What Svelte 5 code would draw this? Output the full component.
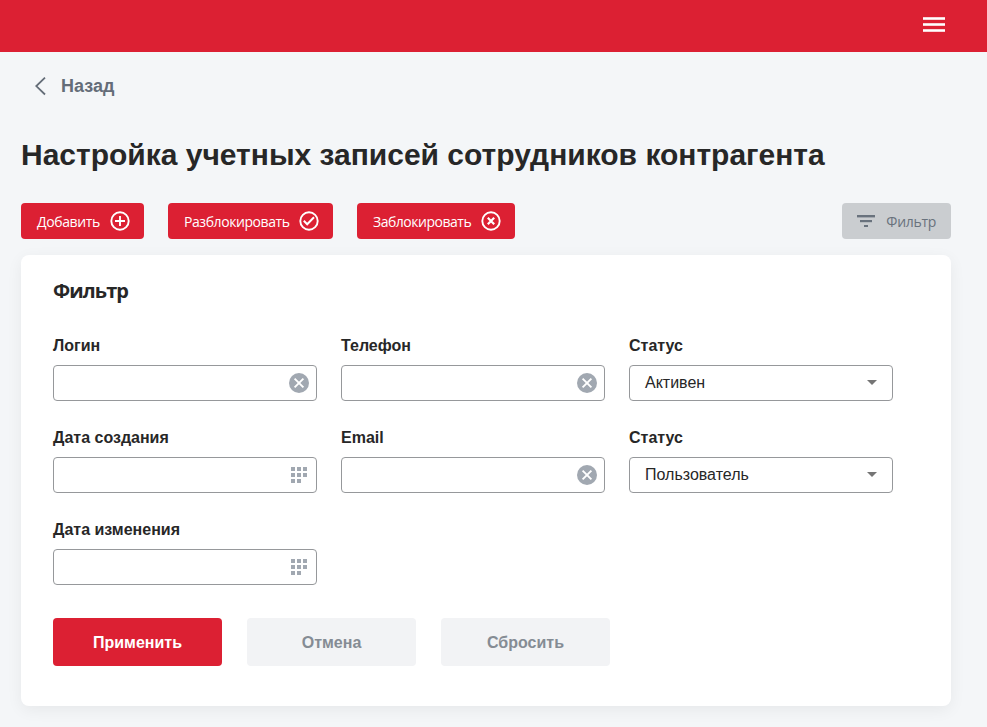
<script>
  const actions = [
    { label: 'Добавить', width: 123, icon: 'add', spacing: -0.37 },
    { label: 'Разблокировать', width: 165, icon: 'check', spacing: -0.43 },
    { label: 'Заблокировать', width: 158, icon: 'block', spacing: -0.48 }
  ];
  const fields = [
    { label: 'Логин', type: 'text' },
    { label: 'Телефон', type: 'text' },
    { label: 'Статус', type: 'select', value: 'Активен' },
    { label: 'Дата создания', type: 'date' },
    { label: 'Email', type: 'text' },
    { label: 'Статус', type: 'select', value: 'Пользователь' },
    { label: 'Дата изменения', type: 'date' }
  ];
  const dots = [0, 1, 2, 3, 4, 5, 6, 7];
</script>

<div class="page">
  <header>
    <svg width="22" height="16" viewBox="0 0 22 16" fill="#fff">
      <rect y="0.2" width="22" height="2.6" /><rect y="6.2" width="22" height="2.6" /><rect y="12.2" width="22" height="2.6" />
    </svg>
  </header>
  <main>
    <div class="back">
      <svg width="12" height="20" viewBox="0 0 12 20" fill="none" stroke="#646d78" stroke-width="1.8"><path d="M11 1.7 2.3 10.1l8.7 8.4" /></svg>
      <span>Назад</span>
    </div>
    <h1>Настройка учетных записей сотрудников контрагента</h1>
    <div class="toolbar">
      {#each actions as a}
        <button class="action" style="width: {a.width}px">
          <span style="letter-spacing: {a.spacing}px">{a.label}</span>
          <svg width="24" height="24" viewBox="0 0 24 24" fill="none" stroke="#fff" stroke-width="1.9">
            <circle cx="12" cy="12" r="8.7" />
            {#if a.icon === 'add'}
              <path d="M12 7v10M7 12h10" />
            {:else if a.icon === 'check'}
              <path d="m6.8 11.8 3.4 3.5 6.8-7" stroke-width="2" />
            {:else}
              <path d="m8.8 8.8 6.4 6.4m0-6.4-6.4 6.4" stroke-width="2.2" />
            {/if}
          </svg>
        </button>
      {/each}
      <button class="action toggle">
        <svg width="18" height="12" viewBox="0 0 18 12" fill="#69727d"><rect y="0" width="18" height="2.4" /><rect x="3" y="5" width="12" height="2.2" /><rect x="7" y="10" width="4" height="2" /></svg>
        <span>Фильтр</span>
      </button>
    </div>
    <section>
      <h2>Фильтр</h2>
      <div class="fields">
        {#each fields as f}
          <div class="field">
            <div class="label">{f.label}</div>
            <div class="box">
              <span>{f.value ?? ''}</span>
              {#if f.type === 'text'}
                <svg class="end" width="20" height="20" viewBox="0 0 20 20"><circle cx="10" cy="10" r="10" fill="#a1a8b1" /><path d="m5.6 5.6 8.8 8.8m0-8.8-8.8 8.8" stroke="#fff" stroke-width="1.9" /></svg>
              {:else if f.type === 'date'}
                <svg class="grid" width="16" height="16" viewBox="0 0 16 16" fill="#a1a8b1">
                  {#each dots as d}<rect x={(d % 3) * 6} y={Math.floor(d / 3) * 6} width="4" height="4" />{/each}
                </svg>
              {:else}
                <svg class="arrow" width="10" height="5" viewBox="0 0 10 5" fill="#757575"><path d="M0 0h10L5 5z" /></svg>
              {/if}
            </div>
          </div>
        {/each}
      </div>
      <div class="buttons">
        <button class="primary">Применить</button>
        <button>Отмена</button>
        <button>Сбросить</button>
      </div>
    </section>
  </main>
</div>

<style>
  :global(body) { background: #f4f6f8; }
  .page { box-sizing: border-box; height: 727px; overflow: hidden; background: #f4f6f8; font-family: "Liberation Sans", Arial, sans-serif; color: #272727; }
  header { box-sizing: border-box; height: 52px; background: #dc2033; display: flex; justify-content: flex-end; padding: 17px 42px 0 0; }
  svg { display: block; flex: none; }
  main { padding: 24px 36px 0 21px; }
  .back { display: flex; align-items: center; height: 20px; padding-left: 13px; gap: 15px; font-size: 18px; font-weight: 700; line-height: 20px; color: #646d78; }
  h1 { margin: 41px 0 0; font-size: 30px; line-height: 36px; font-weight: 700; white-space: nowrap; letter-spacing: -0.01px; }
  .toolbar { display: flex; gap: 24px; margin-top: 30px; }
  button { box-sizing: border-box; border: 0; border-radius: 4px; padding: 0; font-family: inherit; }
  .action { display: flex; align-items: center; justify-content: space-between; height: 36px; padding: 0 12px 0 16px; background: #dc2033; color: #fff; font: 400 14px/20px "Open Sans", "Noto Sans", sans-serif; white-space: nowrap; }
  .action span { padding-top: 2px; }
  .toggle { width: 109px; margin-left: auto; padding: 0 15px 0 15px; background: #cacdd0; color: #69727d; letter-spacing: -0.3px; }
  section { box-sizing: border-box; height: 451px; margin-top: 16px; padding: 24px 32px; border-radius: 8px; background: #fff; box-shadow: 0 4px 16px rgba(0, 0, 0, .06); }
  h2 { margin: 0; font: 700 20px/24px "Open Sans", "Noto Sans", sans-serif; letter-spacing: -0.9px; }
  .fields { display: grid; grid-template-columns: repeat(3, 264px); column-gap: 24px; row-gap: 26px; margin-top: 32px; }
  .label { box-sizing: border-box; height: 20px; padding-top: 1px; line-height: 20px; font-size: 16px; font-weight: 700; }
  .box { box-sizing: border-box; display: flex; align-items: center; justify-content: space-between; height: 36px; margin-top: 10px; border: 1px solid #96989b; border-radius: 4px; padding-left: 15px; font-size: 16px; line-height: 20px; }
  .end { margin-right: 7px; }
  .grid { margin-right: 9px; }
  .arrow { margin: 0 15px 2px 0; }
  .buttons { display: flex; gap: 25px; margin-top: 33px; }
  .buttons button { width: 169px; height: 48px; padding-top: 2px; background: #f2f3f5; color: #858c94; font-size: 16px; font-weight: 700; }
  .buttons .primary { background: #dc2033; color: #fff; }
</style>
